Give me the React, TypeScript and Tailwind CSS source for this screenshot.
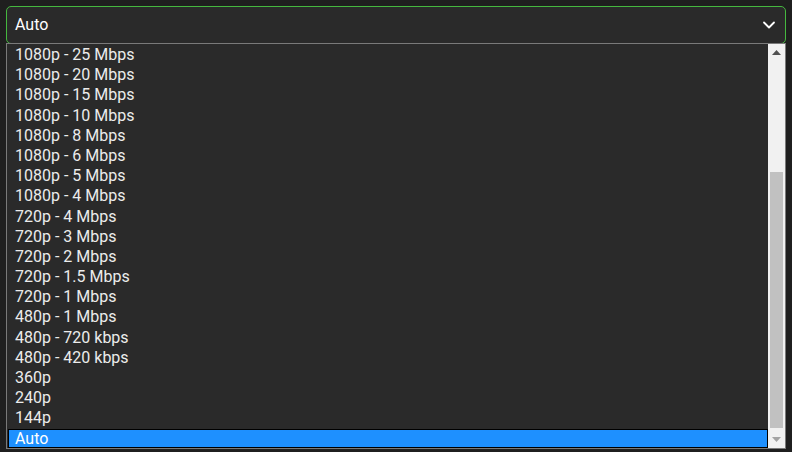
import { ChevronDown } from "lucide-react";

const options = [
  "1080p - 25 Mbps",
  "1080p - 20 Mbps",
  "1080p - 15 Mbps",
  "1080p - 10 Mbps",
  "1080p - 8 Mbps",
  "1080p - 6 Mbps",
  "1080p - 5 Mbps",
  "1080p - 4 Mbps",
  "720p - 4 Mbps",
  "720p - 3 Mbps",
  "720p - 2 Mbps",
  "720p - 1.5 Mbps",
  "720p - 1 Mbps",
  "480p - 1 Mbps",
  "480p - 720 kbps",
  "480p - 420 kbps",
  "360p",
  "240p",
  "144p",
  "Auto",
];

const selected = "Auto";

export default function App() {
  return (
    <div
      className="w-[792px] h-[452px] bg-[#1f1f1f] px-[6px] pt-[6px] overflow-hidden text-[16px] text-[#ececec]"
      style={{ fontFamily: "Roboto, 'Liberation Sans', sans-serif" }}
    >
      {/* Select */}
      <div className="w-[780px] h-[38px] flex items-center justify-between pl-[8px] pr-[6px] bg-[#2a2a2a] border border-[#45b83f] rounded-[5px] text-white">
        <span>Auto</span>
        <ChevronDown className="w-[20px] h-[20px]" strokeWidth={2.2} />
      </div>

      {/* Listbox */}
      <div className="-mt-px w-[780px] h-[406px] flex bg-[#2a2a2a] border border-[#7a7a7a]">
        <ul className="flex-1 pl-px pt-px overflow-hidden">
          {options.map((o) => (
            <li
              key={o}
              className={
                o === selected
                  ? "h-[19px] leading-[17px] pl-[6px] bg-[#1e90ff] text-white border border-black"
                  : "h-[20.2px] leading-[20.2px] pl-[7px]"
              }
            >
              {o}
            </li>
          ))}
        </ul>

        {/* Scrollbar */}
        <div className="w-[17px] flex flex-col bg-[#f1f1f1]">
          <div className="h-[17px] flex items-center justify-center">
            <svg width="9" height="5" viewBox="0 0 9 5">
              <polygon points="4.5,0 9,5 0,5" fill="#505050" />
            </svg>
          </div>
          <div className="flex-1 flex flex-col justify-end pb-[3px]">
            <div className="mx-[2px] h-[256px] bg-[#c1c1c1]" />
          </div>
          <div className="h-[17px] flex items-center justify-center">
            <svg width="9" height="5" viewBox="0 0 9 5">
              <polygon points="0,0 9,0 4.5,5" fill="#a3a3a3" />
            </svg>
          </div>
        </div>
      </div>
    </div>
  );
}
